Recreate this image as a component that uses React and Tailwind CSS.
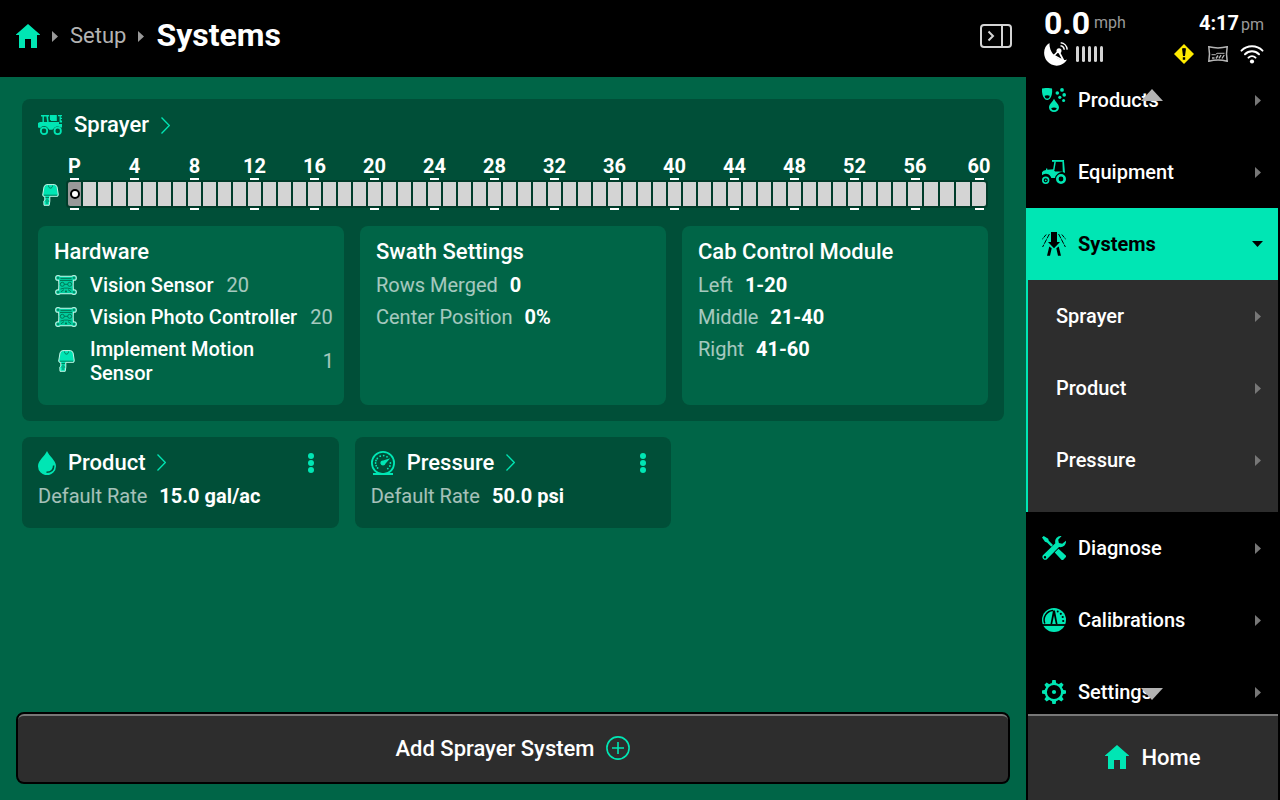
import React from 'react';

const HomeIcon = ({ className = 'size-6' }) => (
    <svg viewBox="0 0 24 24" className={className} fill="currentColor" aria-hidden="true">
        <path d="M12 0 24 10.6V11h-3v13h-6v-9H9v9H3V11H0v-.4z" />
    </svg>
);

const CaretRight = ({ className = '' }) => (
    <svg viewBox="0 0 6 11" className={`h-[11px] w-1.5 shrink-0 ${className}`} fill="currentColor" aria-hidden="true">
        <path d="M0 0 6 5.5 0 11z" />
    </svg>
);

const ChevronThin = () => (
    <svg viewBox="0 0 9 17" className="h-[17px] w-[9px]" fill="none" stroke="#00e6b4" strokeWidth="1.3" aria-hidden="true">
        <path d="M.5.5 8.3 8.5.5 16.5" />
    </svg>
);

const PanelIcon = () => (
    <svg viewBox="0 0 32 24" className="h-6 w-8" fill="none" stroke="#d4d4d4" strokeWidth="2" aria-hidden="true">
        <rect x="1" y="1" width="30" height="22" rx="3" />
        <path d="M22 1v22M8.5 7.5l4.500 4.500-4.500 4.500" />
    </svg>
);

const SprayerIcon = () => (
    <svg viewBox="0 0 24 20" className="h-5 w-6" aria-hidden="true">
        <g fill="#00e6b4">
            <path d="M3 0h8v1.500h-1l.7 5.500H21v2h3v3.500h-1.500a4.800 4.800 0 0 0-7 1.300l-1.200 1h-3l-1-1.300a4.800 4.800 0 0 0-8-.5L0 12.500V8l2-1h2.500V1.500H3zM5.900 1.500V7h3.300l-.8-5.500z" fillRule="evenodd" />
            <path d="M11.800 0h7v6h-5.600L12 4.500z" />
            <path d="M20 0h4v1.300h-1.200v1.400H24V4h-1.200v1.500H24v2h-2.400V1.300H20z" />
        </g>
        <g fill="none" stroke="#00e6b4" strokeWidth="1.800">
            <circle cx="6" cy="15.900" r="3.200" />
            <circle cx="19.700" cy="15.900" r="3.200" />
        </g>
    </svg>
);

const MotionSensorIcon = () => (
    <svg viewBox="0 0 17 22" className="h-[22px] w-[17px] shrink-0" strokeLinejoin="round" aria-hidden="true">
        <path d="M4.800.600h7.600q2.200.3 2.700 2.400l1.200 7.800-.6 1.500H7.800v4.900l-.6 4.100H2l-.2-4.200 1-1V12.300H1.300L.7 11 2 3Q2.500.900 4.800.600z" fill="#00e6b4" stroke="#c4f5e7" strokeWidth="1" />
        <g fill="none" stroke="#006547" strokeWidth=".8">
            <path d="M6.500 1.500c0 3.500 4 3.500 4 0M2 11.200h13" />
            <path d="M3.500 13.500h3.500M3.500 17h3.500M5 14.500v1.500M5 18v2" />
        </g>
    </svg>
);

const KNOBS = [[3, 2.900], [19, 2.900], [3, 17.100], [19, 17.100]];
const SENSOR_BODY = 'M4 1.800h14l-.3 8.200.3 8.200H4l.3-8.200z';

const VisionSensorIcon = () => (
    <svg viewBox="0 0 22 20" className="h-5 w-[22px] shrink-0" strokeLinejoin="round" aria-hidden="true">
        {/* light rim behind the body */}
        <g fill="#c4f5e7" stroke="#c4f5e7" strokeWidth="2">
            <path d={SENSOR_BODY} />
            {KNOBS.map(([x, y]) => (
                <circle key={`${x}-${y}`} cx={x} cy={y} r="1.900" />
            ))}
        </g>
        <g fill="#00cc9d">
            <path d={SENSOR_BODY} />
            {KNOBS.map(([x, y]) => (
                <circle key={`${x}-${y}`} cx={x} cy={y} r="1.900" />
            ))}
        </g>
        <g fill="none" stroke="#006547" strokeWidth=".8">
            <path d="M5.500 3.600h11M5 5.500h12M9.300 9.300h3.400M5.500 14l4-.9h3l4 .9M6 16.800l3-2.200M16 16.800l-3-2.200" />
            <circle cx="7.300" cy="9.300" r="2" />
            <circle cx="14.700" cy="9.300" r="2" />
            {KNOBS.map(([x, y]) => (
                <circle key={`${x}-${y}`} cx={x} cy={y} r=".6" />
            ))}
        </g>
        <path d="M9.800 17.300 11 14.800l1.200 2.500z" fill="#006547" />
    </svg>
);

const DropIcon = () => (
    <svg viewBox="0 0 18 24" className="h-6 w-[18px]" aria-hidden="true">
        <path d="M9 0c2 5 9 9.500 9 15.200A9 9 0 0 1 0 15.200C0 9.500 7 5 9 0z" fill="#00e6b4" />
        <path d="M15.700 14.500c0 4.500-3 6.800-7.200 6.800" fill="none" stroke="#004f38" strokeWidth="1.600" />
    </svg>
);

const GAUGE_DOTS = [
    [6.600, 17], [4.600, 12], [6.300, 7.500], [9.200, 5.200], [12.700, 4.600], [16, 5.800], [19.400, 12], [18.900, 15], [16.800, 17.600], [5.200, 14.700], [5, 9.500],
];

const PressureIcon = () => (
    <svg viewBox="0 0 24 24" className="size-6" fill="#00e6b4" aria-hidden="true">
        <circle cx="12" cy="12" r="11.100" fill="none" stroke="#00e6b4" strokeWidth="1.800" />
        {GAUGE_DOTS.map(([x, y]) => (
            <circle key={`${x}-${y}`} cx={x} cy={y} r=".9" />
        ))}
        <path d="M9.400 12.500a2.700 2.700 0 0 1 2.800-2.900l7-2.400-4.600 5.300a2.700 2.700 0 0 1-5.200 0z" />
        <path d="M2 22h20v2H2z" />
    </svg>
);

const ProductsIcon = () => (
    <svg viewBox="0 0 24 24" className="size-6" fill="#00e6b4" aria-hidden="true">
        <path d="M0 .600Q5-.7 10 .600C10.800 6.500 8.500 12 5.200 12S-.5 6.500 0 .600z" />
        <path d="M12 10.800c1.200 3 5 5.500 5 8.600a5 4.600 0 0 1-10 0C7 16.300 10.800 13.800 12 10.800z" />
        <g fill="#000">
            <path d="M2.700 7.800q2.500-1 5 0c0 2-1.200 2.800-2.500 2.800S2.700 9.800 2.700 7.800z" />
            <path d="M9.300 20q2.700-1.200 5.400 0c0 1.500-1.400 2.200-2.700 2.200S9.300 21.500 9.300 20z" />
        </g>
        <circle cx="15.300" cy="5" r="1.800" />
        <circle cx="20" cy="1.900" r="1.900" />
        <circle cx="22.200" cy="6.900" r="1.800" />
        <circle cx="17.800" cy="9.300" r="1.600" />
        <circle cx="21.600" cy="12.500" r="1.500" />
    </svg>
);

const TractorIcon = () => (
    <svg viewBox="0 0 24 24" className="size-6" fill="#00e6b4" aria-hidden="true">
        <path d="M10 0h12v1.800H10z" />
        <path d="M12.400 1.500h1.500L12.500 10H11zM20.400 1.500H22l1 11.500-2.200-1z" />
        <path d="M0 12.300Q1 10.500 4 10V8.500h1.300v1.300l6.200-.5L13 11.500h3.500l4.500.3a8 8 0 0 0-8 6.200H9.300A5.600 5.600 0 0 0 0 15.300z" />
        <circle cx="3.700" cy="20.300" r="2.900" fill="none" stroke="#00e6b4" strokeWidth="1.600" />
        <circle cx="3.700" cy="20.300" r=".9" />
        <circle cx="19" cy="19" r="3.700" fill="none" stroke="#00e6b4" strokeWidth="2.600" />
    </svg>
);

const SystemsIcon = () => (
    <svg viewBox="0 0 24 24" className="size-6" fill="#000" aria-hidden="true">
        <path d="M9 0h6v10h3l-6 6.300L6 10h3zM7.300 14.500l2.400 1.800L8 23.800H5zM16.700 14.500l-2.400 1.800 1.700 7.500h3z" />
        <g fill="none" stroke="#000" strokeWidth="1">
            <path d="M7.400 2 .6 15M16.600 2l6.800 13" strokeDasharray="5 1" />
            <path d="M4.200 2.500 0 7.500M19.800 2.500l4.200 5" strokeDasharray="4 1" />
        </g>
    </svg>
);

const DiagnoseIcon = () => (
    <svg viewBox="0 0 24 24" className="size-6" fill="#00e6b4" aria-hidden="true">
        <path d="M0 1.500 1.700 0l4.500 2.700.6 2L11 9 9.300 10.700 5 6.500l-2-.8zM16.500 12.700l7 6.500a1.500 1.500 0 0 1 .2 2.100l-2.400 2.400a1.500 1.500 0 0 1-2.100-.1l-6.500-7z" />
        <path
            d="M19.600 0c-3.800-.4-7.200 2.800-6.300 7.300L.9 19.300a2.900 2.900 0 0 0 4 4L17 11c4.200.8 7.400-2.300 7-6.300l-3.800 3-3.300-.8-.7-3.100zM3 20a1.200 1.200 0 1 1 0 2.400A1.200 1.200 0 0 1 3 20z"
            fillRule="evenodd"
        />
    </svg>
);

const CalibrationsIcon = () => (
    <svg viewBox="0 0 24 24" className="size-6" aria-hidden="true">
        <circle cx="12" cy="12" r="12" fill="#00e6b4" />
        <g fill="none" stroke="#000">
            <path d="M2.800 15.500A9.500 9.500 0 0 1 11 2.500" strokeWidth="1.500" />
            <path d="M0 17h24" strokeWidth="1.800" />
        </g>
        <path d="M11 2.500h2L15.500 16h-7z" fill="#000" />
        <path d="M12 7.500 13.800 16h-3.600z" fill="#00e6b4" />
        <g fill="#000">
            <circle cx="15.700" cy="3.600" r="1" />
            <circle cx="18.800" cy="5.800" r="1.100" />
            <circle cx="20.700" cy="9" r="1.100" />
            <circle cx="21.200" cy="13" r="1.100" />
        </g>
    </svg>
);

const TEETH = [0, 45, 90, 135, 180, 225, 270, 315];

const GearIcon = () => (
    <svg viewBox="0 0 24 24" className="size-6" fill="#00e6b4" aria-hidden="true">
        <circle cx="12" cy="12" r="8.200" fill="none" stroke="#00e6b4" strokeWidth="2.200" />
        {TEETH.map((deg) => (
            <path key={deg} d="M10.400 0h3.200l.8 4H9.600z" transform={`rotate(${deg} 12 12)`} />
        ))}
        <circle cx="12" cy="12" r="2.100" />
    </svg>
);

const DishIcon = () => (
    <svg viewBox="0 0 24 24" className="size-6" aria-hidden="true">
        <path d="M5.500 1C-.5 4-1.700 13 3 19c5.500 6.500 15.500 6.300 20-1.500-1.500.5-3 .8-5 .5C11 16.500 5 9 5.500 1z" fill="#fff" />
        <path d="M10 13.500 14.500 9M14.500 9l5 9.500M9 13l9 5" fill="none" stroke="#fff" strokeWidth="1.700" />
        <circle cx="15" cy="8.700" r="2.500" fill="#fff" />
        <path d="M16.500 3.800a4.300 4.300 0 0 1 3.700 3.900M16.700.8a7.300 7.300 0 0 1 6.500 6.800" fill="none" stroke="#fff" strokeWidth="1.500" />
    </svg>
);

const WarningIcon = () => (
    <svg viewBox="0 0 20 20" className="mr-0.5 size-5" aria-hidden="true">
        <path d="M10 0 20 10 10 20 0 10z" fill="#ffeb00" />
        <path d="M8 4.500q2-1.200 4 0L11 12H9zM8.800 13.200h2.400v2.600H8.800z" fill="#000" />
    </svg>
);

const FieldIcon = () => (
    <svg viewBox="0 0 20 16" className="h-4 w-5" fill="none" stroke="#b5b5b5" aria-hidden="true">
        <path d="M.800.800Q10 3 19.200.800l-.7 7.200.7 7.200Q10 13 .800 15.200L1.500 8z" strokeWidth="1.500" />
        <path d="M3.500 8.700h4L9 7.300h7.500" strokeWidth="1" />
        <path d="M4 12h2.500M8 12.500l2-3M11 12.300l2-3.300M14 12.500 16.200 9" strokeWidth="1.400" />
    </svg>
);

const WifiIcon = () => (
    <svg viewBox="0 0 24 19" className="h-[19px] w-6" fill="none" stroke="#fff" strokeWidth="2" strokeLinecap="round" aria-hidden="true">
        <path d="M1.500 5.600a15 15 0 0 1 21 0M5 9.200a10 10 0 0 1 14 0M8.500 12.600a5 5 0 0 1 7 0" />
        <circle cx="12" cy="16.500" r="2.100" fill="#fff" stroke="none" />
    </svg>
);

const PlusCircle = () => (
    <svg viewBox="0 0 24 24" className="size-6" fill="none" stroke="#00e6b4" strokeWidth="1.600" aria-hidden="true">
        <circle cx="12" cy="12" r="11.100" />
        <path d="M12 6v12M6 12h12" />
    </svg>
);

const Kebab = () => (
    <svg viewBox="0 0 6 20" className="h-5 w-1.5" fill="#00e6b4" aria-hidden="true">
        <circle cx="3" cy="3" r="3" />
        <circle cx="3" cy="10" r="3" />
        <circle cx="3" cy="17" r="3" />
    </svg>
);

// the last five columns take up whatever width is left over
const SECTIONS = Array.from({ length: 61 }, (_, i) => ({
    n: i,
    size: i < 56 ? 'w-[13px] min-w-0' : 'min-w-0 grow basis-[13px]',
}));

const Ticks = () => (
    <div className="flex gap-0.5 px-0.5">
        {SECTIONS.map(({ n, size }) => (
            <div key={n} className={`flex h-0.5 justify-center ${size}`}>
                {n % 4 === 0 && <div className="w-[9px] bg-white" />}
            </div>
        ))}
    </div>
);

const SectionBar = () => (
    <div className="flex items-end gap-1">
        <div className="flex h-[31px] w-6 items-center justify-center">
            <MotionSensorIcon />
        </div>
        <div className="min-w-0 flex-1">
            <div className="flex gap-0.5 px-0.5">
                {SECTIONS.map(({ n, size }) => (
                    <div key={n} className={`flex h-6 justify-center text-[20px] leading-6 font-bold ${size}`}>
                        {n % 4 === 0 && <span className="whitespace-nowrap">{n === 0 ? 'P' : n}</span>}
                    </div>
                ))}
            </div>
            <Ticks />
            <div className="flex h-7 gap-0.5 overflow-hidden rounded bg-[#003c2a] p-0.5">
                {SECTIONS.map(({ n, size }) =>
                    n === 0 ? (
                        <div key={n} className={`flex items-center justify-center rounded-l-xs bg-[#999] ${size}`}>
                            <div className="size-2.5 shrink-0 rounded-full border-2 border-black bg-white" />
                        </div>
                    ) : (
                        <div key={n} className={`bg-[#d4d4d4] last:rounded-r-xs ${size}`} />
                    )
                )}
            </div>
            <Ticks />
        </div>
    </div>
);

const InfoCard = ({ title, children }) => (
    <section className="rounded-lg bg-[#006547] px-4 pt-3 pb-5">
        <h3 className="mb-2 text-[22px] leading-[27px] font-medium">{title}</h3>
        <div className="flex flex-col gap-2 text-[20px] leading-6">{children}</div>
    </section>
);

const Stat = ({ label, value }) => (
    <p className="flex gap-3 text-[20px] leading-6">
        <span className="text-white/65">{label}</span>
        <span className="font-bold">{value}</span>
    </p>
);

const HardwareRow = ({ icon, name, count }) => (
    <div className="-mr-1.5 flex items-center">
        <div className="mr-3 flex w-6 shrink-0 justify-center">{icon}</div>
        <span className="mr-[13px] font-medium">{name}</span>
        <span className="text-white/65">{count}</span>
    </div>
);

const RateCard = ({ icon, title, value }) => (
    <section className="rounded-lg bg-[#004f38] px-4 pt-3 pb-5">
        <div className="mb-2 flex h-[27px] items-center justify-between">
            <a href="#" className="flex items-center gap-3 text-[22px] leading-[27px] font-medium">
                {icon}
                {title}
                <ChevronThin />
            </a>
            <button type="button" aria-label={`${title} options`} className="px-[9px]">
                <Kebab />
            </button>
        </div>
        <Stat label="Default Rate" value={value} />
    </section>
);

const NavItem = ({ icon, label }) => (
    <a href="#" className="flex h-[72px] shrink-0 items-center gap-3 pr-[17px] pl-4">
        {icon}
        <span className="flex-1">{label}</span>
        <CaretRight className="text-[#777]" />
    </a>
);

const Sidebar = () => (
    <aside className="flex w-[254px] shrink-0 flex-col bg-black pr-0.5">
        <div className="flex h-[77px] shrink-0 flex-col pt-2 pr-3.5 pl-[18px]">
            <div className="flex h-8 items-center justify-between pb-0.5">
                <div className="flex items-center gap-1">
                    <span className="text-[32px] leading-8 font-bold">0.0</span>
                    <span className="text-[16px] text-[#999]">mph</span>
                </div>
                <div className="flex items-baseline gap-0.5">
                    <span className="text-[20px] font-bold">4:17</span>
                    <span className="text-[16px] text-[#999]">pm</span>
                </div>
            </div>
            <div className="mt-0.5 flex h-6 items-center justify-between">
                <div className="flex items-center gap-2">
                    <DishIcon />
                    <div className="flex gap-[3px]">
                        {[1, 2, 3, 4, 5].map((n) => (
                            <div key={n} className="h-4 w-[3px] rounded-full bg-[#d4d4d4]" />
                        ))}
                    </div>
                </div>
                <div className="flex items-center gap-3">
                    <WarningIcon />
                    <FieldIcon />
                    <WifiIcon />
                </div>
            </div>
        </div>
        <nav className="relative min-h-0 flex-1">
            <div className="-mt-[13px] flex h-[calc(100%+13px)] flex-col overflow-hidden text-[20px] font-medium">
                <NavItem icon={<ProductsIcon />} label="Products" />
                <NavItem icon={<TractorIcon />} label="Equipment" />
                <a href="#" className="flex h-[72px] shrink-0 items-center gap-3 bg-[#00e6b4] pr-[15px] pl-4 text-black">
                    <SystemsIcon />
                    <span className="flex-1 font-bold">Systems</span>
                    <svg viewBox="0 0 11 6" className="h-1.5 w-[11px]" aria-hidden="true">
                        <path d="M0 0h11L5.500 6z" />
                    </svg>
                </a>
                <div className="shrink-0 border-l-2 border-[#00e6b4] bg-[#2d2d2d] pb-4">
                    {['Sprayer', 'Product', 'Pressure'].map((label) => (
                        <a key={label} href="#" className="flex h-[72px] items-center pr-[17px] pl-7">
                            <span className="flex-1">{label}</span>
                            <CaretRight className="text-[#777]" />
                        </a>
                    ))}
                </div>
                <NavItem icon={<DiagnoseIcon />} label="Diagnose" />
                <NavItem icon={<CalibrationsIcon />} label="Calibrations" />
                <NavItem icon={<GearIcon />} label="Settings" />
            </div>
            <svg viewBox="0 0 22 12" className="absolute top-3 left-1/2 h-3 w-[22px] -translate-x-1/2" fill="#b3b3b3" aria-hidden="true">
                <path d="M11 0 22 12H0z" />
            </svg>
            <svg viewBox="0 0 22 12" className="absolute bottom-3.5 left-1/2 h-3 w-[22px] -translate-x-1/2" fill="#b3b3b3" aria-hidden="true">
                <path d="M0 0h22L11 12z" />
            </svg>
        </nav>
        <button type="button" className="ml-0.5 flex h-[86px] shrink-0 items-center justify-center gap-3 border-t-2 border-[#777] bg-[#2d2d2d] pb-0.5 text-[22px] font-medium">
            <HomeIcon className="size-6 text-[#00e6b4]" />
            Home
        </button>
    </aside>
);

const App = () => {
    return (
        <div className="flex h-screen overflow-hidden bg-[#006547] font-['Roboto',sans-serif] text-white">
            <div className="flex min-w-0 flex-1 flex-col">
                <header className="flex h-[77px] shrink-0 items-center justify-between bg-black pr-[14px] pb-[5px] pl-4">
                    <div className="flex items-center gap-3">
                        <a href="#" aria-label="Home">
                            <HomeIcon className="size-6 text-[#00e6b4]" />
                        </a>
                        <CaretRight className="text-[#999]" />
                        <a href="#" className="pb-0.5 text-[22px] text-[#b3b3b3]">Setup</a>
                        <CaretRight className="text-[#999]" />
                        <h1 className="pb-0.5 text-[32px] leading-10 font-bold">Systems</h1>
                    </div>
                    <button type="button" aria-label="Toggle side panel">
                        <PanelIcon />
                    </button>
                </header>
                <main className="flex min-h-0 flex-1 flex-col gap-4 overflow-hidden p-[22px]">
                    <section className="rounded-lg bg-[#004f38] px-4 pt-3 pb-4">
                        <a href="#" className="mb-[15px] flex w-fit items-center gap-3 text-[22px] leading-7 font-medium">
                            <SprayerIcon />
                            Sprayer
                            <ChevronThin />
                        </a>
                        <SectionBar />
                        <div className="mt-4 grid grid-cols-3 gap-4">
                            <InfoCard title="Hardware">
                                <HardwareRow icon={<VisionSensorIcon />} name="Vision Sensor" count="20" />
                                <HardwareRow icon={<VisionSensorIcon />} name="Vision Photo Controller" count="20" />
                                <HardwareRow icon={<MotionSensorIcon />} name="Implement Motion Sensor" count="1" />
                            </InfoCard>
                            <InfoCard title="Swath Settings">
                                <Stat label="Rows Merged" value="0" />
                                <Stat label="Center Position" value="0%" />
                            </InfoCard>
                            <InfoCard title="Cab Control Module">
                                <Stat label="Left" value="1-20" />
                                <Stat label="Middle" value="21-40" />
                                <Stat label="Right" value="41-60" />
                            </InfoCard>
                        </div>
                    </section>
                    <div className="grid grid-cols-3 gap-4">
                        <RateCard icon={<DropIcon />} title="Product" value="15.0 gal/ac" />
                        <RateCard icon={<PressureIcon />} title="Pressure" value="50.0 psi" />
                    </div>
                </main>
                <div className="shrink-0 p-4 pt-0">
                    <button type="button" className="h-[72px] w-full rounded-lg border-2 border-black bg-black">
                        <span className="flex h-full items-center justify-center gap-3 rounded-md border-t-2 border-[#777] bg-[#2d2d2d] pb-0.5 text-[22px] font-medium">
                            Add Sprayer System
                            <PlusCircle />
                        </span>
                    </button>
                </div>
            </div>
            <Sidebar />
        </div>
    );
};

export default App;
